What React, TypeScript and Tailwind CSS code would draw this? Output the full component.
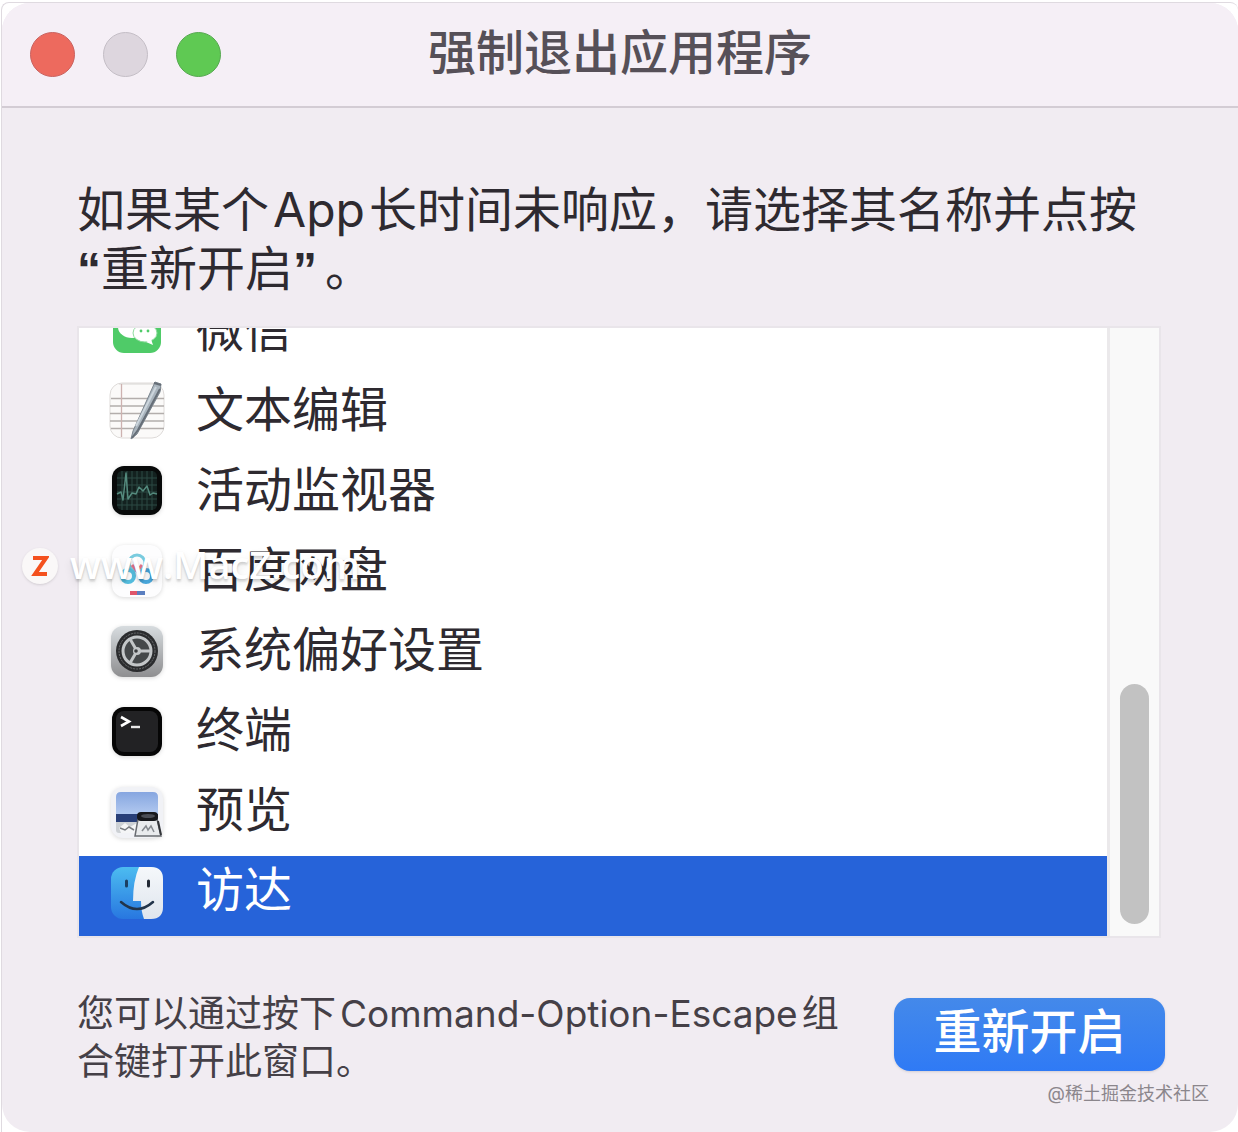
import type { FC, ReactNode } from "react";

interface RunningApp {
  name: string;
  icon: ReactNode;
}

const WechatIcon = () => (
  <svg viewBox="0 0 60 60" className="size-15">
    <rect x="6" y="6" width="48" height="47" rx="11" fill="#4fcb68" />
    <ellipse cx="25" cy="27" rx="14" ry="11" fill="#fff" />
    <ellipse cx="38" cy="33" rx="12" ry="9" fill="#fff" stroke="#8fdc9f" strokeWidth="1" />
    <path d="M44 39l2 6-7-3z" fill="#fff" />
    <circle cx="34" cy="31" r="1.4" fill="#4fcb68" />
    <circle cx="41" cy="31" r="1.4" fill="#4fcb68" />
  </svg>
);

const TextEditIcon = () => (
  <svg viewBox="0 0 60 60" className="size-15">
    <rect x="3" y="3" width="54" height="55" rx="12" fill="#fbfaf9" stroke="#dedbd9" />
    <path d="M12 4h36" stroke="#d8d5d3" />
    <path
      d="M4 18.500h53M3 26h54M3 33.500h54M3 41h54M4 48.500h53"
      stroke="#b3aeac"
      strokeWidth="1.300"
    />
    <path d="M14.500 4v53" stroke="#cdb2b0" strokeWidth="1.300" />
    <path d="M48 2l6 2-1 8-23 42-6 5 2-8z" fill="#a9b4bd" stroke="#7c868f" strokeWidth="1" />
    <path d="M49 7L29 46" stroke="#ccd5dc" strokeWidth="2" />
    <path d="M53 9L31 50l-6 8" stroke="#666e77" strokeWidth="2" fill="none" />
    <path d="M47 3l7 2" stroke="#666e77" strokeWidth="2" />
  </svg>
);

const ActivityIcon = () => (
  <svg viewBox="0 0 60 60" className="size-15 drop-shadow-sm">
    <rect x="5" y="6" width="50" height="49" rx="12" fill="#080a0a" />
    <rect x="10" y="11" width="40" height="39" rx="5" fill="#13211f" />
    <path
      d="M15 11v39M20 11v39M25 11v39M30 11v39M35 11v39M40 11v39M45 11v39M10 18h40M10 25h40M10 32h40M10 39h40M10 45h40"
      stroke="#2c4a45"
      strokeWidth="1"
    />
    <path
      d="M10 34l4-2 2 8 3-27 2 26 4-6 4 1 3-7 4 4 4-5 3 9 3-2 4 1"
      stroke="#548a7d"
      strokeWidth="1.500"
      fill="none"
      strokeLinejoin="round"
    />
  </svg>
);

const NetdiskIcon = () => (
  <svg viewBox="0 0 60 60" className="size-15 drop-shadow-sm">
    <rect x="5" y="5" width="50" height="52" rx="12" fill="#fdfdfe" />
    <circle cx="30" cy="23" r="8" fill="none" stroke="#7accdf" strokeWidth="3" />
    <circle cx="21" cy="36" r="6" fill="none" stroke="#56bfe0" strokeWidth="4" />
    <circle cx="39" cy="36" r="6" fill="none" stroke="#4aa9de" strokeWidth="4" />
    <path d="M25 25l5 6 5-6" fill="none" stroke="#e8788a" strokeWidth="3" />
    <path d="M23 53h8" stroke="#e0566b" strokeWidth="4" />
    <path d="M30 53h8" stroke="#5b7fc0" strokeWidth="4" />
  </svg>
);

const SettingsIcon = () => (
  <svg viewBox="0 0 60 60" className="size-15 drop-shadow-sm">
    <defs>
      <linearGradient id="settings-bg" x1="0" y1="0" x2="0" y2="1">
        <stop offset="0" stopColor="#d7dcdf" />
        <stop offset="1" stopColor="#8e8e90" />
      </linearGradient>
    </defs>
    <rect x="4" y="6" width="52" height="51" rx="12" fill="url(#settings-bg)" />
    <circle cx="30" cy="31" r="21" fill="#2b2c2e" />
    <circle cx="30" cy="31" r="18" fill="none" stroke="#6d6f71" strokeWidth="1" strokeDasharray="2 1" />
    <circle cx="30" cy="31" r="14" fill="#45484a" stroke="#c3c6c8" strokeWidth="3" />
    <path d="M30 31h14M30 31l-7-12M30 31l-7 12" stroke="#c3c6c8" strokeWidth="3" />
    <circle cx="30" cy="31" r="4" fill="#c3c6c8" />
    <circle cx="29" cy="31" r="1.800" fill="#3a3c3e" />
  </svg>
);

const TerminalIcon = () => (
  <svg viewBox="0 0 60 60" className="size-15 drop-shadow-sm">
    <rect x="5" y="7" width="50" height="49" rx="12" fill="#060606" />
    <rect x="9" y="11" width="42" height="41" rx="8" fill="#222224" />
    <path d="M14 17l8 4.500-8 4.500" stroke="#fff" strokeWidth="2.600" fill="none" />
    <path d="M24 27h9" stroke="#e8e8e8" strokeWidth="2.400" />
  </svg>
);

const PreviewIcon = () => (
  <svg viewBox="0 0 60 60" className="size-15 drop-shadow-sm">
    <defs>
      <linearGradient id="preview-sky" x1="0" y1="0" x2="0" y2="1">
        <stop offset="0" stopColor="#86a6e0" />
        <stop offset="1" stopColor="#b3caf0" />
      </linearGradient>
    </defs>
    <rect x="4" y="7" width="52" height="51" rx="12" fill="#f1f2f6" />
    <path d="M9 17q0-5 5-5h32q5 0 5 5v18H9z" fill="url(#preview-sky)" />
    <path d="M9 34h42v8H9z" fill="#283f78" />
    <path d="M9 42h42v11H12q-3 0-3-3z" fill="#ccd0d4" />
    <path d="M12 48l6-5 5 4 7-4v10H14z" fill="#f4f5f6" />
    <path d="M13 48l5 2 4-3 5 3" stroke="#777b80" strokeWidth="1.500" fill="none" />
    <path d="M31 39h19l4 17H28z" fill="#e9ebed" stroke="#6a6d72" strokeWidth="1.500" />
    <rect x="30" y="32" width="21" height="9" rx="4" fill="#17181c" />
    <ellipse cx="41" cy="36" rx="7" ry="2" fill="#4a4d55" />
    <path d="M35 51l4-5 2 4 3-4 3 6" stroke="#85898e" strokeWidth="1.500" fill="none" />
    <path d="M51 41l3 14" stroke="#333539" strokeWidth="2" />
  </svg>
);

const FinderIcon = () => (
  <svg viewBox="0 0 60 60" className="size-15">
    <defs>
      <linearGradient id="finder-blue" x1="0" y1="0" x2="0" y2="1">
        <stop offset="0" stopColor="#4cbcf0" />
        <stop offset="1" stopColor="#2877e0" />
      </linearGradient>
      <linearGradient id="finder-white" x1="0" y1="0" x2="0" y2="1">
        <stop offset="0" stopColor="#f5f8fb" />
        <stop offset="1" stopColor="#dfe5ed" />
      </linearGradient>
    </defs>
    <rect x="4" y="7" width="52" height="52" rx="12" fill="url(#finder-blue)" />
    <path
      d="M32 7h12q12 0 12 12v28q0 12-12 12h-7q-3-8-3-18h-8q0-20 6-34z"
      fill="url(#finder-white)"
    />
    <path d="M19.500 21v5" stroke="#1c3f63" strokeWidth="3" strokeLinecap="round" />
    <path d="M41.500 21v5" stroke="#222a35" strokeWidth="3" strokeLinecap="round" />
    <path d="M14 42q16 14 32 0" stroke="#22344a" strokeWidth="2.500" fill="none" strokeLinecap="round" />
  </svg>
);

const apps: RunningApp[] = [
  { name: "微信", icon: <WechatIcon /> },
  { name: "文本编辑", icon: <TextEditIcon /> },
  { name: "活动监视器", icon: <ActivityIcon /> },
  { name: "百度网盘", icon: <NetdiskIcon /> },
  { name: "系统偏好设置", icon: <SettingsIcon /> },
  { name: "终端", icon: <TerminalIcon /> },
  { name: "预览", icon: <PreviewIcon /> },
  { name: "访达", icon: <FinderIcon /> },
];

const TitleBar: FC = () => (
  <header className="grid h-[105px] grid-cols-[1fr_auto_1fr] items-center border-b-2 border-[#d3ccd4] bg-[#f5eff6] px-7">
    <div className="flex gap-7">
      <button aria-label="关闭" className="size-[45px] rounded-full border border-[#c9625f] bg-[#ed6a5e]" />
      <button aria-label="最小化" className="size-[45px] rounded-full border border-[#c4bec6] bg-[#ddd6de]" />
      <button aria-label="缩放" className="size-[45px] rounded-full border border-[#56a850] bg-[#5fc953]" />
    </div>
    <h1 className="pb-1 text-[48px] leading-[60px] font-medium text-[#565058]">强制退出应用程序</h1>
  </header>
);

const AppRow: FC<{ app: RunningApp; selected: boolean }> = ({ app, selected }) => (
  <li>
    <button
      className={
        selected
          ? "flex h-20 w-full items-center gap-[29px] bg-[#2663d9] pb-3 pl-7 text-left text-white"
          : "flex h-20 w-full items-center gap-[29px] pb-3 pl-7 text-left"
      }
    >
      {app.icon}
      <span className="text-[48px] leading-[60px]">{app.name}</span>
    </button>
  </li>
);

const Watermark: FC = () => (
  <div className="pointer-events-none absolute top-[546px] left-[22px] flex items-center gap-3">
    <span className="flex size-9 items-center justify-center rounded-full bg-[#faf8f8] shadow-sm">
      <svg viewBox="0 0 18 20" className="h-5 w-[18px]">
        <path d="M2 2h13L4 18h12" fill="none" stroke="#f4511e" strokeWidth="4" />
      </svg>
    </span>
    <span className="pb-1 font-['Open_Sans',sans-serif] text-[38px] leading-9 font-semibold text-white text-shadow-lg">
      www.MacZ.com
    </span>
  </div>
);

const App: FC = () => {
  return (
    <div className="relative min-h-screen bg-white pt-[2px] pl-px font-[Inter,'Noto_Sans_CJK_SC',sans-serif] text-[#2e2a30]">
      <div className="rounded-t-lg border-t border-l border-[#dfdae0]">
        <main className="min-h-[1129px] overflow-hidden rounded-[28px] bg-[#f1ecf2]">
          <TitleBar />
          <div className="pt-[72px] pr-[73px] pl-[75px]">
            <p className="text-[48px] leading-[59px]">
              如果某个<span className="mx-1">App</span>长时间未响应，请选择其名称并点按
              <br />
              <span className="font-['Liberation_Sans',sans-serif] font-bold">“</span>重新开启
              <span className="pr-2 font-['Liberation_Sans',sans-serif] font-bold">”</span>。
            </p>
            <div className="mt-[27px] mr-1 flex h-[612px] border-2 border-[#e9e5ea] bg-white">
              <ul className="flex min-w-0 grow flex-col justify-end overflow-hidden">
                {apps.map((app) => (
                  <AppRow key={app.name} app={app} selected={app.name === "访达"} />
                ))}
              </ul>
              <div className="flex w-[52px] items-end justify-center border-l-3 border-[#ebe9eb] bg-[#f9f9f9] pb-3">
                <div className="h-60 w-[29px] rounded-full bg-[#c2c2c2]" />
              </div>
            </div>
            <div className="mt-[52px] flex items-center justify-between">
              <p className="w-[770px] text-[37px] leading-[48px] text-[#454047]">
                您可以通过按下<span className="mx-1">Command-Option-Escape</span>组合键打开此窗口。
              </p>
              <button className="mb-2 h-[73px] w-[271px] rounded-2xl bg-linear-to-b from-[#4489ea] to-[#2f7af5] pb-1 text-[48px] leading-[60px] font-medium text-white shadow-sm">
                重新开启
              </button>
            </div>
          </div>
        </main>
      </div>
      <Watermark />
      <p className="absolute right-[29px] bottom-[26px] text-[18px] leading-6 text-[#8b868c]">@稀土掘金技术社区</p>
    </div>
  );
};

export default App;
